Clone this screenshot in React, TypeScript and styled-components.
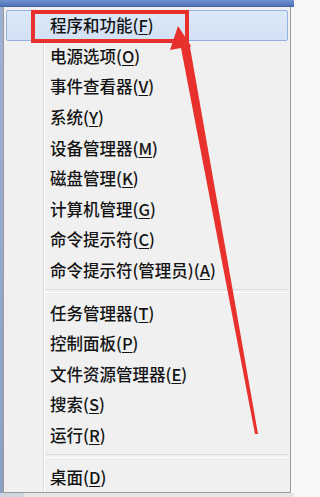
import React from "react";
import styled, { createGlobalStyle, css } from "styled-components";

const Global = createGlobalStyle`
  html, body { margin: 0; padding: 0; background: #f7f7f7; }
  * { box-sizing: border-box; }
`;

const Page = styled.div`
  position: relative;
  width: 294px;
  height: 497px;
  overflow: hidden;
  background: #f5f5f5;
  font-family: "Noto Sans CJK SC", "Microsoft YaHei", sans-serif;
`;

const TitleStrip = styled.div`
  height: 7px;
  background: linear-gradient(#7093d0, #4f73b6 85%, #3f5f9e);
`;

const Body = styled.div`
  display: flex;
  height: 486px;
`;

const SideStrip = styled.div`
  width: 3px;
  background: linear-gradient(#9db2d3, #8aa0c4);
`;

const RightGap = styled.div`
  width: 3px;
  background: #fafafa;
`;

const Menu = styled.div`
  flex: 1;
  display: flex;
  flex-direction: column;
  padding: 3px 2px 0 2px;
  border: 1px solid #9a9a9a;
  border-top: none;
  background:
    linear-gradient(
      to right,
      transparent 39px,
      #dcdcdc 39px,
      #dcdcdc 40px,
      #ffffff 40px,
      #ffffff 41px,
      transparent 41px
    ),
    #f0f0f0;
`;

const Item = styled.div<{ $active?: boolean }>`
  height: 30.6px;
  flex: none;
  display: flex;
  align-items: center;
  padding-left: 43px;
  font-size: 16.5px;
  font-weight: 500;
  color: #141414;
  white-space: nowrap;
  border: 1px solid transparent;
  border-radius: 2px;
  ${(p) =>
    p.$active &&
    css`
      border-color: #93b2e3;
      background: linear-gradient(#dce8f7, #d2e1f4);
    `}
`;

const Key = styled.span`
  text-decoration: underline;
  text-underline-offset: 2px;
  text-decoration-thickness: 1px;
`;

const Separator = styled.div<{ $h: number }>`
  height: ${(p) => p.$h}px;
  flex: none;
  display: flex;
  align-items: center;
  padding-left: 39px;
  &::after {
    content: "";
    flex: 1;
    height: 2px;
    border-top: 1px solid #dcdcdc;
    border-bottom: 1px solid #ffffff;
  }
`;

const Footer = styled.div`
  height: 4px;
  background: linear-gradient(to right, #cfd6e0 0 24px, #e6e6e6 24px);
`;

const Overlay = styled.div`
  position: absolute;
  inset: 0;
  pointer-events: none;
`;

const RedBox = styled.div`
  position: absolute;
  left: 31px;
  top: 10px;
  width: 158px;
  height: 33px;
  border: 4px solid #e8312c;
`;

const ArrowSvg = styled.svg`
  position: absolute;
  left: 0;
  top: 0;
`;

type Entry = { label: string; key: string } | { sep: number };

const entries: Entry[] = [
  { label: "程序和功能", key: "F" },
  { label: "电源选项", key: "O" },
  { label: "事件查看器", key: "V" },
  { label: "系统", key: "Y" },
  { label: "设备管理器", key: "M" },
  { label: "磁盘管理", key: "K" },
  { label: "计算机管理", key: "G" },
  { label: "命令提示符", key: "C" },
  { label: "命令提示符(管理员)", key: "A" },
  { sep: 12 },
  { label: "任务管理器", key: "T" },
  { label: "控制面板", key: "P" },
  { label: "文件资源管理器", key: "E" },
  { label: "搜索", key: "S" },
  { label: "运行", key: "R" },
  { sep: 11 },
  { label: "桌面", key: "D" },
];

export default function App() {
  return (
    <>
      <Global />
      <Page>
        <TitleStrip />
        <Body>
          <SideStrip />
          <Menu>
            {entries.map((e, i) =>
              "sep" in e ? (
                <Separator key={i} $h={e.sep} />
              ) : (
                <Item key={i} $active={i === 0}>
                  {e.label}(<Key>{e.key}</Key>)
                </Item>
              )
            )}
          </Menu>
          <RightGap />
        </Body>
        <Footer />
        <Overlay>
          <RedBox />
          <ArrowSvg width="294" height="497" viewBox="0 0 294 497">
            <polygon
              points="178,26 170,50 181,48 255,434 258,434 190,47 191,46"
              fill="#e8312c"
            />
          </ArrowSvg>
        </Overlay>
      </Page>
    </>
  );
}
